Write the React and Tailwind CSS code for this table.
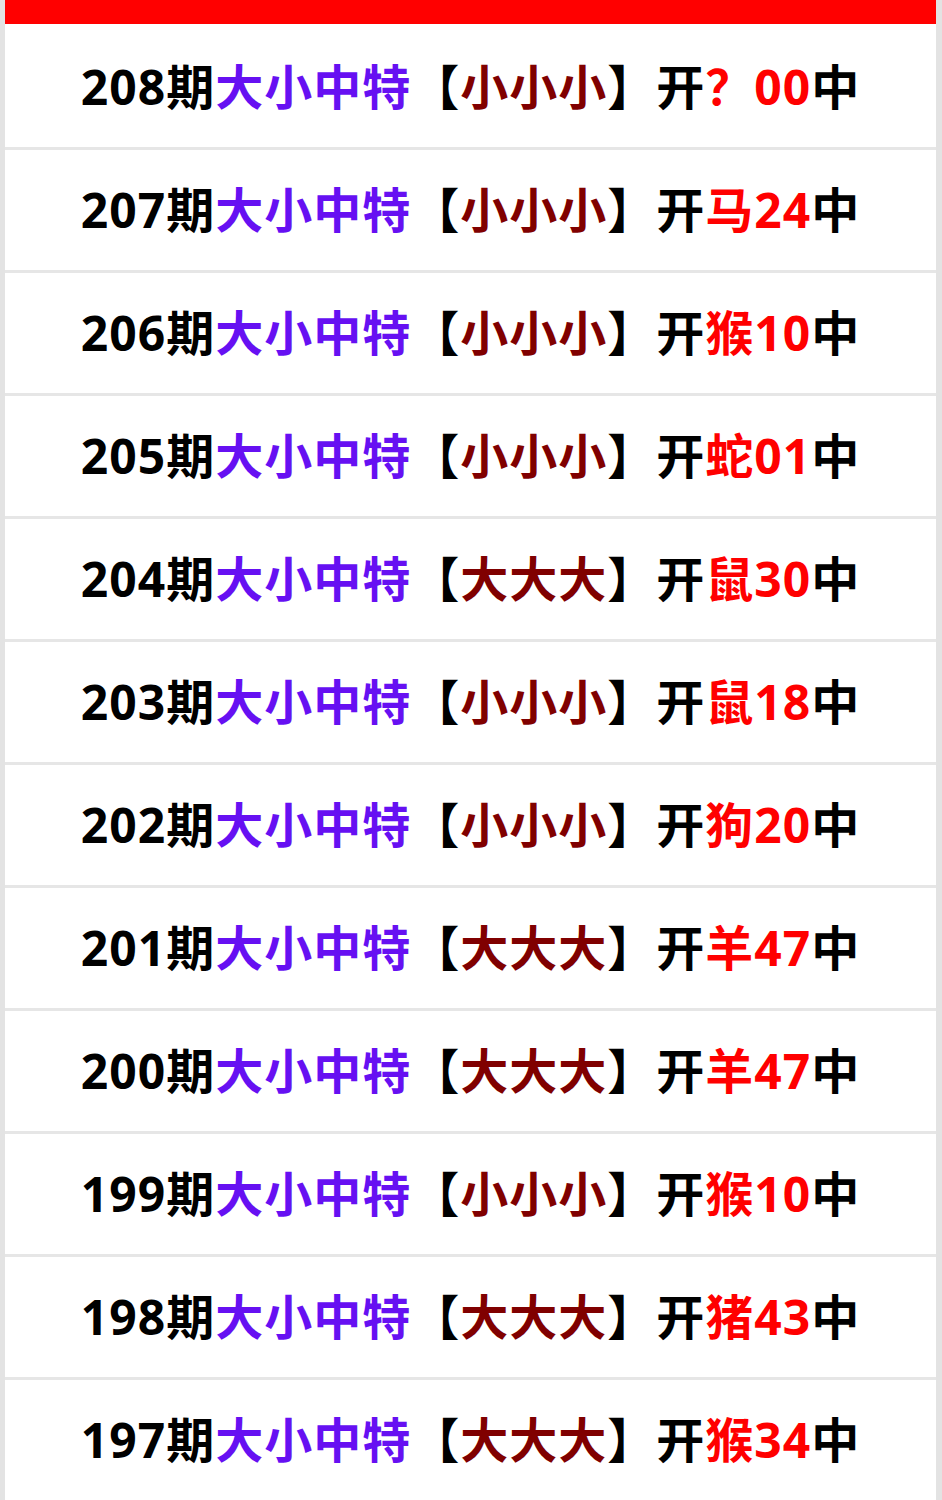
import React from 'react';

const rows = [
  { qi: '208', pick: '小小小', sx: '？', num: '00' },
  { qi: '207', pick: '小小小', sx: '马', num: '24' },
  { qi: '206', pick: '小小小', sx: '猴', num: '10' },
  { qi: '205', pick: '小小小', sx: '蛇', num: '01' },
  { qi: '204', pick: '大大大', sx: '鼠', num: '30' },
  { qi: '203', pick: '小小小', sx: '鼠', num: '18' },
  { qi: '202', pick: '小小小', sx: '狗', num: '20' },
  { qi: '201', pick: '大大大', sx: '羊', num: '47' },
  { qi: '200', pick: '大大大', sx: '羊', num: '47' },
  { qi: '199', pick: '小小小', sx: '猴', num: '10' },
  { qi: '198', pick: '大大大', sx: '猪', num: '43' },
  { qi: '197', pick: '大大大', sx: '猴', num: '34' },
];

// 一行记录
const Row = ({ r }) => (
  <div className="h-[123px] flex items-center justify-center border-b-[3px] border-[#e6e6e6] bg-white whitespace-nowrap tracking-[1px]">
    <span className="text-black">{r.qi}期</span>
    <span className="text-[#6610f2]">大小中特</span>
    <span className="text-black">【</span>
    <span className="text-[#800000]">{r.pick}</span>
    <span className="text-black">】开</span>
    <span className="text-[#ff0000]">{r.sx}{r.num}</span>
    <span className="text-black">中</span>
  </div>
);

const App = () => {
  return (
    <div className="min-h-screen bg-[#e3e3e3] pl-[5px] pr-[6px]">
      <div
        className="bg-white text-[48px] font-bold leading-none"
        style={{ fontFamily: '"Noto Sans", "Noto Sans CJK SC", sans-serif' }}
      >
        <div className="h-[24px] bg-[#ff0000]" />
        <div className="h-[3px] bg-white" />
        {rows.map((r) => (
          <Row key={r.qi} r={r} />
        ))}
      </div>
    </div>
  );
};

export default App;
